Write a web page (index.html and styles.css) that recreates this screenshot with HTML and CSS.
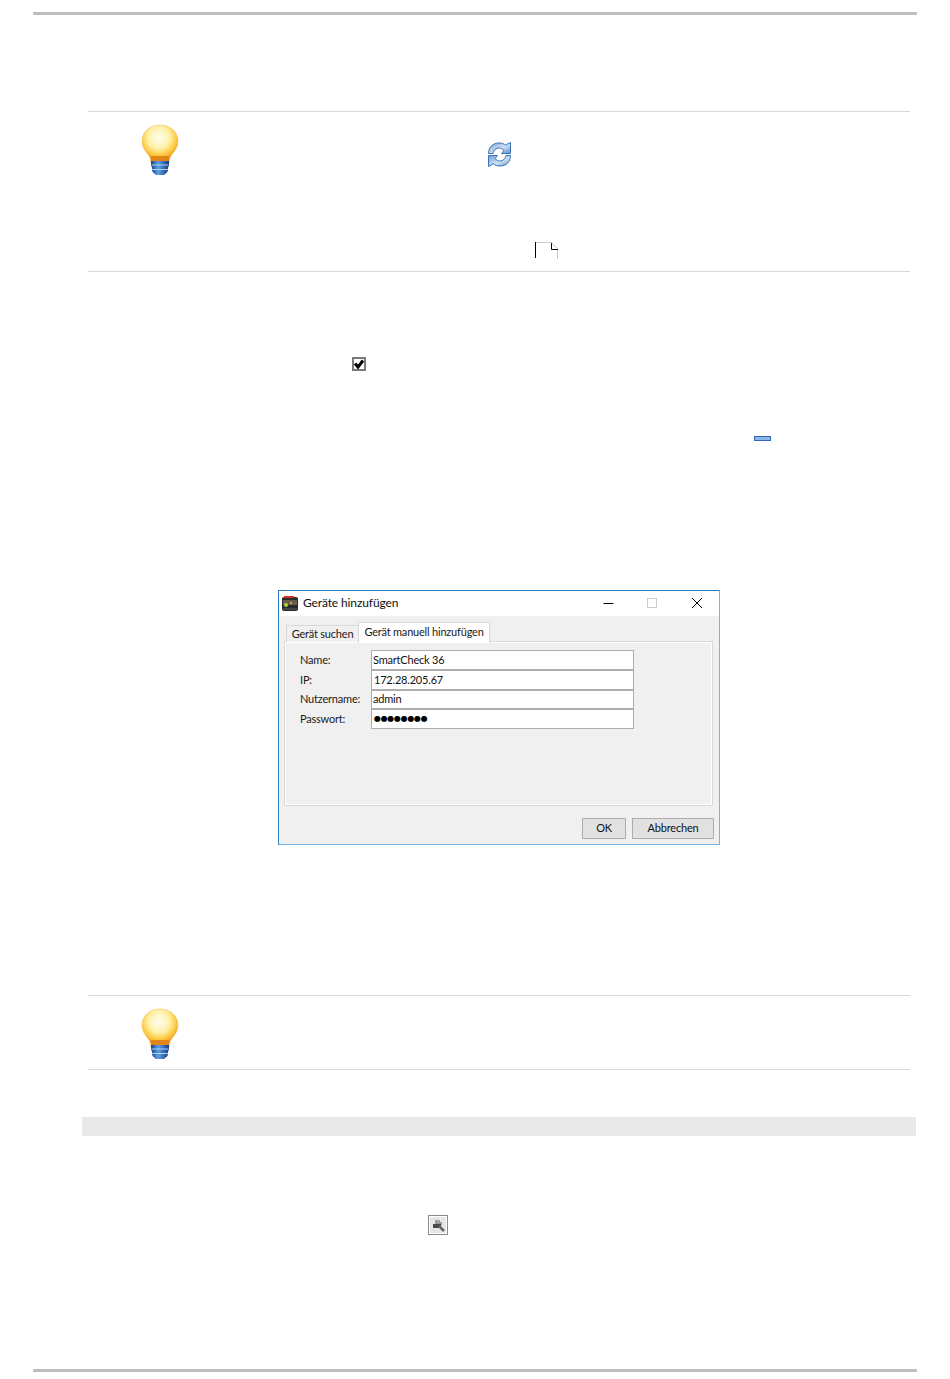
FILE: index.html
```html
<!DOCTYPE html>
<html lang="de">
<head>
<meta charset="utf-8">
<title>Geräte hinzufügen</title>
<link rel="stylesheet" href="styles.css">
</head>
<body>
<div class="page">
  <div class="rule rule-top"></div>

  <section class="note note-first">
    <svg class="bulb" viewBox="0 0 38 52" width="38" height="52" aria-hidden="true">
      <defs>
        <radialGradient id="glass" cx="0.47" cy="0.34" r="0.6">
          <stop offset="0" stop-color="#fffef2"/>
          <stop offset="0.5" stop-color="#fff0a8"/>
          <stop offset="0.8" stop-color="#fdc93f"/>
          <stop offset="1" stop-color="#ec9c1e"/>
        </radialGradient>
        <linearGradient id="screw" x1="0" x2="1" y1="0" y2="0">
          <stop offset="0" stop-color="#173f8c"/>
          <stop offset="0.4" stop-color="#5f9fe4"/>
          <stop offset="1" stop-color="#143a82"/>
        </linearGradient>
        <linearGradient id="arrow" x1="0" x2="1" y1="0" y2="1">
          <stop offset="0" stop-color="#6f9fd4"/>
          <stop offset="0.55" stop-color="#cfe0f2"/>
          <stop offset="1" stop-color="#5c90cc"/>
        </linearGradient>
      </defs>
      <path d="M19 1C8.500 1 1 8 1 17c0 7 4 10.500 7 15 1.300 2 1.500 4 1.700 6h18.600c.2-2 .4-4 1.700-6 3-4.500 7-8 7-15C37 8 29.500 1 19 1z" fill="url(#glass)" stroke="#f4c56a" stroke-width=".6"/>
      <path d="M10 32h18l-.5 6h-17z" fill="#e3841a"/>
      <path d="M10 37h18v4.500l-1 2v3l-1 2-3 2.500h-8l-3-2.500-1-2v-3l-1-2z" fill="url(#screw)"/>
      <path d="M10.500 41h17M11 45.500h16" stroke="#a9d2f6" stroke-width="1"/>
    </svg>
    <div class="note-inline">
      <svg class="refresh" viewBox="0 0 23 25" width="23" height="25" aria-hidden="true">
        <path d="M.5 11.500C.5 5 5 1 11 1c3 0 5 .8 6.500 2.200L22.500.5v11h-9l2.500-3C14.500 7 13 6 11.500 6 8 6 5.500 8 5 11.500z" fill="url(#arrow)" stroke="#3a72ba"/>
        <path d="M22.500 13.500C22.500 20 18 24 12 24c-3 0-5-.8-6.500-2.200L.5 24.500v-11h9L7 16.500c1.500 1.500 3 2.500 4.500 2.500 3.500 0 6-2 6.500-5.500z" fill="url(#arrow)" stroke="#3a72ba"/>
      </svg>
      <svg class="page-glyph" viewBox="0 0 24 17" width="24" height="17" aria-hidden="true">
        <path d="M.5 0v16" stroke="#000" fill="none"/>
        <path d="M1 .5h15.500l6 6V17" stroke="#c8c8c8" fill="none"/>
        <path d="M16.500 1v6.500H23" stroke="#000" fill="none"/>
      </svg>
    </div>
  </section>

  <svg class="check" viewBox="0 0 14 14" width="14" height="14" aria-hidden="true">
    <rect x="1" y="1" width="12" height="12" fill="#fff" stroke="#7a7a7a" stroke-width="2"/>
    <path d="M3 6.500l3 3.500 5-6.500" fill="none" stroke="#000" stroke-width="3"/>
  </svg>

  <div class="minimize"></div>

  <div class="dialog">
    <header class="titlebar">
      <svg class="app-icon" viewBox="0 0 16 15" width="16" height="15" aria-hidden="true">
        <rect y="1" width="16" height="14" rx="2" fill="#2b2b2b"/>
        <rect x="2" y="0" width="10" height="2" fill="#d5332c"/>
        <rect x="1" y="4" width="14" height="5" fill="#6a5c48"/>
        <circle cx="4" cy="9" r="2" fill="#a8d040"/>
        <circle cx="9" cy="7" r="1" fill="#f0c030"/>
        <rect x="1" y="12" width="14" height="2" fill="#444"/>
      </svg>
      <span class="title">Geräte hinzufügen</span>
      <div class="controls">
        <svg class="ctl" viewBox="0 0 45 26" width="45" height="26" aria-hidden="true"><path d="M19.500 12.500h10" stroke="#000"/></svg>
        <svg class="ctl" viewBox="0 0 45 26" width="45" height="26" aria-hidden="true"><rect x="18.500" y="7.500" width="9" height="9" fill="none" stroke="#ccc"/></svg>
        <svg class="ctl" viewBox="0 0 45 26" width="45" height="26" aria-hidden="true"><path d="M18 7l10 10M28 7l-10 10" stroke="#000" fill="none"/></svg>
      </div>
    </header>
    <div class="dialog-body">
      <div class="tabs">
        <div class="tab">Gerät suchen</div>
        <div class="tab tab-active">Gerät manuell hinzufügen</div>
      </div>
      <div class="panel">
        <div class="form">
          <div class="field"><span class="label">Name:</span><div class="input">SmartCheck 36</div></div>
          <div class="field"><span class="label">IP:</span><div class="input input-ip">172.28.205.67</div></div>
          <div class="field field-short"><span class="label">Nutzername:</span><div class="input">admin</div></div>
          <div class="field"><span class="label">Passwort:</span><div class="input input-secret">●●●●●●●●</div></div>
        </div>
      </div>
      <div class="actions">
        <div class="btn btn-ok">OK</div>
        <div class="btn btn-cancel">Abbrechen</div>
      </div>
    </div>
  </div>

  <section class="note note-second">
    <svg class="bulb" viewBox="0 0 38 52" width="38" height="52" aria-hidden="true">
      <path d="M19 1C8.500 1 1 8 1 17c0 7 4 10.500 7 15 1.300 2 1.500 4 1.700 6h18.600c.2-2 .4-4 1.700-6 3-4.500 7-8 7-15C37 8 29.500 1 19 1z" fill="url(#glass)" stroke="#f4c56a" stroke-width=".6"/>
      <path d="M10 32h18l-.5 6h-17z" fill="#e3841a"/>
      <path d="M10 37h18v4.500l-1 2v3l-1 2-3 2.500h-8l-3-2.500-1-2v-3l-1-2z" fill="url(#screw)"/>
      <path d="M10.500 41h17M11 45.500h16" stroke="#a9d2f6" stroke-width="1"/>
    </svg>
  </section>

  <div class="band"></div>

  <svg class="tool" viewBox="0 0 20 20" width="20" height="20" aria-hidden="true">
    <rect x=".5" y=".5" width="19" height="19" fill="#e6e6e6" stroke="#8a8a8a"/>
    <rect x="1.500" y="1.500" width="17" height="17" fill="none" stroke="#fff"/>
    <path d="M7 5h5v2h2v3H7z" fill="#9a9a9a"/>
    <path d="M5 9h8v4H5z" fill="#4a4a4a"/>
    <path d="M11 11l5 5" stroke="#666" stroke-width="2.500"/>
    <path d="M9.500 6h1" stroke="#fff"/>
  </svg>

  <div class="rule rule-bottom"></div>
</div>
</body>
</html>
```
FILE: styles.css
```css
* { box-sizing: border-box; }
html, body { margin: 0; padding: 0; background: #fff; }
.page {
  width: 950px;
  height: 1379px;
  overflow: hidden;
  font-family: "Lato", "Liberation Sans", sans-serif;
  color: #000;
}
svg { display: block; }

.rule { height: 3px; margin-left: 33px; width: 884px; background: #bdbdbd; border-radius: 1px; }
.rule-top { margin-top: 12px; }
.rule-bottom { margin-top: 134px; }

.note {
  margin-left: 88px;
  width: 822px;
  border-top: 1px solid #d9d9d9;
  border-bottom: 1px solid #d9d9d9;
  display: flex;
  align-items: flex-start;
  padding-left: 53px;
}
.note-first { margin-top: 96px; height: 161px; padding-top: 12px; }
.note-second { margin-top: 150px; height: 75px; padding-top: 12px; }

.note-inline { padding-left: 309px; padding-top: 18px; }
.page-glyph { margin-top: 75px; margin-left: 47px; }

.check { margin: 85px 0 0 352px; }
.minimize {
  margin: 65px 0 0 754px;
  width: 17px;
  height: 5px;
  background: #8fb6e8;
  border: 1px solid #2f66b5;
}

.dialog {
  margin: 149px 0 0 278px;
  width: 442px;
  height: 255px;
  background: #f0f0f0;
  border: 1px solid;
  border-color: #2b7cc0 #74b4e8 #6fb2e8 #2b7cc0;
  display: flex;
  flex-direction: column;
  font-size: 11px;
  line-height: 14px;
  letter-spacing: -0.2px;
}
.titlebar {
  height: 25px;
  background: #fff;
  display: flex;
  align-items: center;
  padding-left: 3px;
  flex: none;
}
.app-icon { flex: none; }
.title { margin: 0 0 2px 5px; font-size: 12px; letter-spacing: -0.12px; flex: 1; color: #111; }
.controls { display: flex; }
.ctl { flex: none; }

.dialog-body { flex: 1; display: flex; flex-direction: column; padding: 6px 6px 0 5px; }
.tabs { display: flex; align-items: flex-end; height: 20px; padding-left: 2px; position: relative; z-index: 1; margin-bottom: -1px; }
.tab {
  height: 17px;
  width: 73px;
  border: 1px solid #d9d9d9;
  border-bottom: 0;
  background: #f0f0f0;
  text-align: center;
  color: #1a1a1a;
  line-height: 15px;
  white-space: nowrap;
}
.tab-active {
  height: 21px;
  width: 132px;
  margin-left: -1px;
  background: #fff;
  line-height: 17px;
  margin-bottom: -1px;
}
.panel {
  width: 429px;
  height: 165px;
  border: 1px solid #d9d9d9;
  box-shadow: inset 1px 1px 0 #fff, inset -1px -1px 0 #fff;
  padding: 8px 0 0 15px;
}
.field { display: flex; align-items: center; height: 20px; }
.field-short { height: 19px; }
.label { width: 71px; color: #1a1a1a; flex: none; }
.field-short .label { margin-bottom: 2px; }
.input {
  width: 263px;
  height: 100%;
  background: #fff;
  border: 1px solid #adadad;
  padding-left: 1px;
  line-height: 17px;
  color: #111;
  white-space: nowrap;
}
.field-short .input { line-height: 15px; }
.input-ip { padding-left: 2px; }
.input-secret { padding-left: 2px; font-size: 8px; letter-spacing: -0.3px; font-family: "DejaVu Sans", sans-serif; line-height: 18px; color: #000; }

.actions { display: flex; justify-content: flex-end; padding: 12px 0 0; }
.btn {
  height: 21px;
  background: #e1e1e1;
  border: 1px solid #adadad;
  text-align: center;
  line-height: 17px;
  color: #111;
}
.btn-ok { width: 44px; margin-right: 6px; }
.btn-cancel { width: 82px; margin-right: -1px; }

.band { margin: 47px 0 0 82px; width: 834px; height: 19px; background: #e9e9e9; }
.tool { margin: 79px 0 0 428px; }
```
